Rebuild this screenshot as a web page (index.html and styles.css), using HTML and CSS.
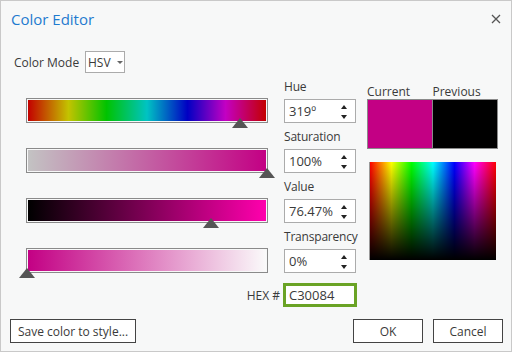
FILE: index.html
```html
<!DOCTYPE html>
<html>
<head>
<meta charset="utf-8">
<title>Color Editor</title>
<link rel="stylesheet" href="styles.css">
</head>
<body>
<div class="dialog">
	<div class="titlebar">
		<span class="title">Color Editor</span>
		<span class="close">
			<svg width="10" height="10" viewBox="0 0 10 10"><path d="M1 1 L9 9 M9 1 L1 9" stroke="#555" stroke-width="1.3" fill="none"/></svg>
		</span>
	</div>

	<div class="mode">
		<span class="mode-label">Color Mode</span>
		<div class="select">HSV<span class="caret"></span></div>
	</div>

	<div class="editor">
		<div class="slider hue"><span class="thumb" style="left: 88.6%"></span></div>
		<div class="field">
			<label>Hue</label>
			<div class="spin"><span>319º</span><span class="arrows"><i class="up"></i><i class="down"></i></span></div>
		</div>

		<div class="swatches">
			<div class="swatch-labels"><span>Current</span><span>Previous</span></div>
			<div class="swatch"><span class="current"></span><span class="previous"></span></div>
			<div class="spectrum"></div>
		</div>

		<div class="slider sat"><span class="thumb" style="left: 100%"></span></div>
		<div class="field">
			<label>Saturation</label>
			<div class="spin"><span>100%</span><span class="arrows"><i class="up"></i><i class="down"></i></span></div>
		</div>

		<div class="slider val"><span class="thumb" style="left: 76.47%"></span></div>
		<div class="field">
			<label>Value</label>
			<div class="spin"><span>76.47%</span><span class="arrows"><i class="up"></i><i class="down"></i></span></div>
		</div>

		<div class="slider alpha"><span class="thumb" style="left: 0%"></span></div>
		<div class="field">
			<label>Transparency</label>
			<div class="spin"><span>0%</span><span class="arrows"><i class="up"></i><i class="down"></i></span></div>
		</div>

		<div class="hex">
			<label>HEX #</label>
			<div class="hex-input">C30084</div>
		</div>
	</div>

	<div class="footer">
		<button class="btn save">Save color to style...</button>
		<div class="actions">
			<button class="btn">OK</button>
			<button class="btn">Cancel</button>
		</div>
	</div>
</div>
</body>
</html>
```

FILE: styles.css
```css
body {
	margin: 0;
	background: #ffffff;
	font-family: "Open Sans", "Noto Sans", sans-serif;
	font-size: 12px;
	color: #3a3a3a;
}

.dialog {
	width: 512px;
	height: 352px;
	box-sizing: border-box;
	border: 1px solid #c9c9c9;
	background-color: #f7f8f8;
}

.titlebar {
	height: 37px;
	display: flex;
	align-items: center;
	justify-content: space-between;
	padding: 0 10px 0 10px;
}

.title {
	font-size: 15px;
	color: #1f7bcf;
	margin-top: -1px;
}

.close {
	display: flex;
	margin-top: -2px;
}

.mode {
	margin-top: 13px;
	display: flex;
	align-items: center;
	padding-left: 13px;
}

.mode-label {
	width: 71px;
}

.select {
	width: 40px;
	height: 22px;
	box-sizing: border-box;
	border: 1px solid #ababab;
	background: #ffffff;
	display: flex;
	align-items: center;
	padding-left: 2px;
	font-size: 12px;
}

.caret {
	margin-left: 6px;
	border-left: 3px solid transparent;
	border-right: 3px solid transparent;
	border-top: 3px solid #666;
}

/* sliders / inputs / swatches */
.editor {
	display: grid;
	grid-template-columns: 242px 72px 126px;
	grid-template-rows: 50px 50px 50px 50px auto;
	column-gap: 16px;
	padding-left: 25px;
}

.slider {
	position: relative;
	align-self: end;
	height: 25px;
	box-sizing: border-box;
	border: 1px solid #8a8a8a;
	padding: 1px;
	background-clip: content-box;
	background-color: #fff;
}

.slider::before {
	content: "";
	display: block;
	height: 100%;
}

.hue::before {
	background: linear-gradient(to right, #c30000, #c3c300 17%, #00c300 33%, #00c3c3 50%, #0000c3 67%, #c300c3 83%, #c30000);
}

.sat::before {
	background: linear-gradient(to right, #c3c3c3, #c30084);
}

.val::before {
	background: linear-gradient(to right, #000000, #ff00ad);
}

.alpha::before {
	background: linear-gradient(to right, #c30084, #fafafa);
}

.thumb {
	position: absolute;
	top: 19px;
	margin-left: -8px;
	width: 0;
	height: 0;
	border-left: 8px solid transparent;
	border-right: 8px solid transparent;
	border-bottom: 10px solid #555555;
}

.field {
	display: flex;
	flex-direction: column;
}

.field label {
	height: 26px;
	line-height: 28px;
	letter-spacing: -0.2px;
}

.spin {
	height: 24px;
	box-sizing: border-box;
	border: 1px solid #ababab;
	background: #ffffff;
	display: flex;
	align-items: center;
	justify-content: space-between;
	padding: 0 8px 0 4px;
	font-size: 13px;
}

.arrows {
	display: flex;
	flex-direction: column;
	gap: 6px;
	margin-top: 1px;
}

.arrows i {
	width: 0;
	height: 0;
	border-left: 3px solid transparent;
	border-right: 3px solid transparent;
}

.arrows .up { border-bottom: 4px solid #222; }
.arrows .down { border-top: 4px solid #222; }

.swatches {
	grid-column: 3;
	grid-row: 1 / span 4;
	width: 131px;
	padding-top: 11px;
	margin-left: -5px;
}

.swatch-labels {
	display: flex;
	height: 15px;
	line-height: 15px;
}

.swatch-labels span {
	width: 66px;
}

.swatch {
	display: flex;
	height: 50px;
	box-sizing: border-box;
	border: 1px solid #8a8a8a;
}

.swatch span {
	flex: 1;
}

.swatch .current {
	background: #c30084;
	border-right: 1px solid #8a8a8a;
}

.swatch .previous {
	background: #000000;
}

.spectrum {
	margin: 13px 2px 0 2px;
	height: 98px;
	border-left: 1px solid #9a9a9a;
	background:
		linear-gradient(to bottom, rgba(0,0,0,0), #000000),
		linear-gradient(to right, #ff0000, #ffff00 17%, #00ff00 33%, #00ffff 50%, #0000ff 67%, #ff00ff 83%, #ff0000);
}

.hex {
	grid-column: 1 / 3;
	margin-top: 10px;
	margin-right: -1px;
	display: flex;
	justify-content: flex-end;
	align-items: center;
	gap: 3px;
}

.hex-input {
	width: 74px;
	height: 24px;
	box-sizing: border-box;
	border: 3px solid #6aa325;
	background: #ffffff;
	padding-left: 3px;
	font-size: 13px;
	line-height: 18px;
}

.footer {
	margin-top: 12px;
	display: flex;
	justify-content: space-between;
	padding: 0 8px 0 9px;
}

.actions {
	display: flex;
	gap: 10px;
}

.btn {
	height: 24px;
	min-width: 70px;
	padding: 0 10px;
	border: 1px solid #444444;
	background: #ffffff;
	font-family: inherit;
	font-size: 12px;
	color: #3a3a3a;
}

.save {
	width: 126px;
	padding: 0;
}
```
